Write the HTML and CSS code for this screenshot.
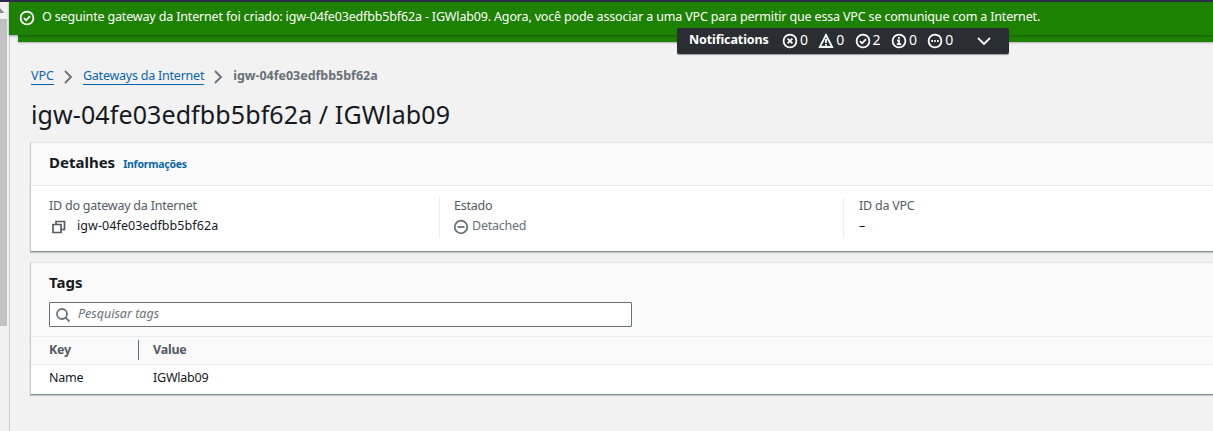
FILE: index.html
```html
<!DOCTYPE html>
<html lang="pt-BR">
<head>
<meta charset="utf-8">
<title>Gateways da Internet | VPC</title>
<link rel="stylesheet" href="styles.css">
</head>
<body>
<div class="topbar"></div>
<div class="shell">
  <aside class="rail">
    <div class="scrollbar">
      <svg class="scroll-up" width="7" height="17" viewBox="0 0 7 17"><path d="M-5 11L0 6L4.5 11Z" fill="#8b8b8b"/></svg>
      <div class="thumb"></div>
    </div>
  </aside>
  <main class="main">
    <div class="flash">
      <svg width="16" height="16" viewBox="0 0 16 16" class="icon"><circle cx="8" cy="8" r="6.4"/><path d="M4.9 8.2L7.1 10.3L11 6.1"/></svg>
      <span class="flash-text">O seguinte gateway da Internet foi criado: igw-04fe03edfbb5bf62a - IGWlab09. Agora, você pode associar a uma VPC para permitir que essa VPC se comunique com a Internet.</span>
    </div>
    <div class="flash-stack"></div>
    <div class="notif">
      <b class="notif-title">Notifications</b>
      <span class="count"><svg width="16" height="16" viewBox="0 0 16 16" class="icon"><circle cx="8" cy="8" r="6.4"/><path d="M5.6 5.6L10.4 10.4M10.4 5.6L5.6 10.4"/></svg>0</span>
      <span class="count"><svg width="16" height="16" viewBox="0 0 16 16" class="icon"><path d="M8 2L14.2 14H1.8ZM8 6V10M8 11V12.8"/></svg>0</span>
      <span class="count"><svg width="16" height="16" viewBox="0 0 16 16" class="icon"><circle cx="8" cy="8" r="6.4"/><path d="M4.9 8.2L7.1 10.3L11 6.1"/></svg>2</span>
      <span class="count"><svg width="16" height="16" viewBox="0 0 16 16" class="icon"><circle cx="8" cy="8" r="6.4"/><path d="M8 4V5.8M6.2 7.5H8V11.2M5.8 11.2H10.2"/></svg>0</span>
      <span class="count"><svg width="16" height="16" viewBox="0 0 16 16" class="icon"><circle cx="8" cy="8" r="6.4"/><path d="M4.3 8H6M7.2 8H8.8M10 8H11.7"/></svg>0</span>
      <svg width="16" height="16" viewBox="0 0 16 16" class="icon caret"><path d="M2 5L8 11L14 5"/></svg>
    </div>
    <div class="content">
      <nav class="crumbs">
        <a class="crumb-vpc">VPC</a>
        <svg width="16" height="16" viewBox="0 0 16 16" class="icon sep"><path d="M5 2L11 8L5 14"/></svg>
        <a class="crumb-gw">Gateways da Internet</a>
        <svg width="16" height="16" viewBox="0 0 16 16" class="icon sep"><path d="M5 2L11 8L5 14"/></svg>
        <b class="crumb-id">igw-04fe03edfbb5bf62a</b>
      </nav>
      <h1>igw-04fe03edfbb5bf62a / IGWlab09</h1>
      <section class="card">
        <header class="card-head"><h2 class="h-details">Detalhes</h2><a class="info">Informações</a></header>
        <div class="cols">
          <div class="col">
            <div class="label">ID do gateway da Internet</div>
            <div class="value"><svg width="16" height="16" viewBox="0 0 16 16" class="icon copy"><path d="M2 5.5H10V13.5H2ZM5 5.5V2.5H13.5V10.5H10"/></svg><span class="gw-id">igw-04fe03edfbb5bf62a</span></div>
          </div>
          <div class="col">
            <div class="label">Estado</div>
            <div class="value muted"><svg width="16" height="16" viewBox="0 0 16 16" class="icon state"><circle cx="8" cy="8" r="6.3"/><path d="M4.5 8H11.5"/></svg><span>Detached</span></div>
          </div>
          <div class="col">
            <div class="label">ID da VPC</div>
            <div class="value">–</div>
          </div>
        </div>
      </section>
      <section class="card tags">
        <header class="tags-head">
          <h2>Tags</h2>
          <div class="search"><svg width="16" height="16" viewBox="0 0 16 16" class="icon"><circle cx="7" cy="7" r="5"/><path d="M10.5 10.5L14.5 14.5"/></svg><i>Pesquisar tags</i></div>
        </header>
        <div class="row head"><b class="key">Key</b><b class="val">Value</b></div>
        <div class="row"><span class="key">Name</span><span class="val">IGWlab09</span></div>
      </section>
    </div>
  </main>
</div>
</body>
</html>
```
FILE: styles.css
```css
* { box-sizing: border-box; }
body { margin: 0; width: 1213px; height: 431px; overflow: hidden; background: #f2f2f2; color: #16191f; font: 12.5px/20px "Noto Sans", sans-serif; letter-spacing: -0.23px; }
h1, h2 { margin: 0; }
.icon { display: block; flex: none; fill: none; stroke: currentColor; stroke-width: 1.8; }
.topbar { height: 2px; background: #2b2c49; }
.shell { display: flex; height: 429px; }
.rail { width: 10px; flex: none; background: #f2f2f2; border-right: 1px solid #c8cccc; }
.scrollbar { width: 7px; height: 100%; background: #f1f1f1; }
.scroll-up { display: block; }
.thumb { height: 307px; background: #c1c1c1; }
.main { position: relative; flex: none; width: 1204px; margin-left: -1px; }
.flash { position: relative; display: flex; align-items: center; height: 33px; padding: 0 0 3px 10px; background: #1d8102; color: #fff; gap: 7px; box-shadow: 0 1px 2px rgba(0,28,36,.4); white-space: nowrap; }
.flash .icon { margin-top: 2px; }
.flash-text { letter-spacing: -0.16px; }
.flash-stack { height: 7px; margin-left: 9px; background: #1d8102; box-shadow: 0 1px 2px rgba(0,28,36,.3); }
.notif { position: absolute; left: 668px; top: 26px; width: 332px; height: 26px; display: flex; align-items: center; padding: 0 17px 2px 12px; background: #2a2e33; color: #fff; border-radius: 2px; box-shadow: 0 1px 1px rgba(0,28,36,.4); }
.notif-title { width: 93px; letter-spacing: -0.1px; }
.count { display: flex; width: 36.3px; gap: 2px; font-size: 14px; }
.count .icon { margin-top: 3px; }
.caret { margin-left: auto; margin-top: 2px; }
.content { padding: 24px 0 0 21px; }
.crumbs { display: flex; align-items: center; height: 20px; padding-left: 1px; }
.crumbs a { color: #0b65ad; border-bottom: 1px solid #0b65ad; line-height: 17px; }
.crumb-vpc { letter-spacing: 0; }
.crumb-id { letter-spacing: -0.02px; }
.crumbs b, .sep { color: #687078; }
.sep { margin: 2px 7px 0 6px; }
h1 { font-size: 25px; font-weight: 400; line-height: 32px; margin: 12px 0 0 1px; letter-spacing: 0.1px; }
.card { height: 110px; margin-top: 12px; background: #fff; border: 1px solid #e3e5e6; border-left-color: #c4c8ca; border-bottom-color: #879196; border-right: 0; box-shadow: 0 1px 1px rgba(0,28,36,.2); }
.card-head { display: flex; align-items: baseline; height: 43px; padding: 8px 18px 0; background: #fafafa; border-bottom: 1px solid #eaeded; }
h2 { font-size: 15px; font-weight: 700; line-height: 22px; letter-spacing: 0; }
.info { margin-left: 8px; color: #0b65ad; font-size: 10.5px; font-weight: 700; }
.cols { display: flex; padding: 11px 0 0 18px; }
.col { height: 41px; width: 404px; flex: none; }
.col + .col { border-left: 1px solid #eaeded; padding-left: 14px; margin-left: -14px; width: 418px; }
.col:last-child { padding-left: 15px; }
.label { color: #545b64; line-height: 20px; margin-top: -1px; }
.value { display: flex; align-items: center; line-height: 20px; }
.muted { color: #687078; }
.copy { margin: 2px 10px 0 2px; color: #545b64; stroke-width: 1.7; }
.gw-id { letter-spacing: 0.08px; }
.state { margin: 2px 3px 0 -1px; }
.tags { height: 133px; margin-top: 10px; }
.tags-head { height: 74px; padding: 8px 18px 0; background: #fafafa; border-bottom: 1px solid #eaeded; }
.search { display: flex; align-items: center; gap: 7px; width: 583px; height: 25px; margin-top: 9px; padding-left: 6px; border: 1px solid #687078; border-radius: 1px; background: #fff; color: #687078; }
.search i { margin-top: -1px; letter-spacing: 0; }
.search .icon { margin-left: -1px; }
.row { display: flex; height: 29px; padding: 3px 18px; }
.head { height: 28px; background: #fafafa; border-bottom: 1px solid #eaeded; color: #545b64; }
.key { width: 90px; }
.head .key { border-right: 1px solid #687078; height: 20px; }
.val { padding-left: 14px; }
```
